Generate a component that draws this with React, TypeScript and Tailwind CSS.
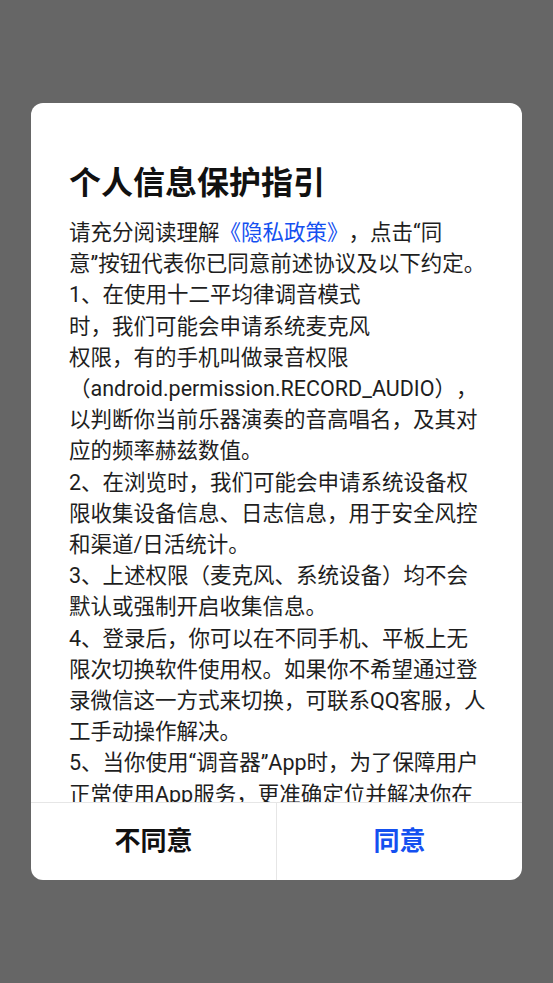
import React from 'react';

const FONT = { fontFamily: 'Roboto, "Noto Sans CJK SC", sans-serif' };

const lines: React.ReactNode[] = [
  <>
    请充分阅读理解<span className="text-[#1450f0]">《隐私政策》</span>，点击“同
  </>,
  '意”按钮代表你已同意前述协议及以下约定。',
  '1、在使用十二平均律调音模式',
  '时，我们可能会申请系统麦克风',
  '权限，有的手机叫做录音权限',
  '（android.permission.RECORD_AUDIO），',
  '以判断你当前乐器演奏的音高唱名，及其对',
  '应的频率赫兹数值。',
  '2、在浏览时，我们可能会申请系统设备权',
  '限收集设备信息、日志信息，用于安全风控',
  '和渠道/日活统计。',
  '3、上述权限（麦克风、系统设备）均不会',
  '默认或强制开启收集信息。',
  '4、登录后，你可以在不同手机、平板上无',
  '限次切换软件使用权。如果你不希望通过登',
  '录微信这一方式来切换，可联系QQ客服，人',
  '工手动操作解决。',
  '5、当你使用“调音器”App时，为了保障用户',
  '正常使用App服务，更准确定位并解决你在',
  '使用过程中遇到的问题，我们会收集必要的',
  '设备信息。',
];

export default function App() {
  return (
    <div
      className="w-full h-[983px] bg-[#666666] pt-[103px] px-[31px] [text-spacing-trim:space-all]"
      style={FONT}
    >
      <div className="w-[491px] h-[777px] bg-white rounded-[12px] overflow-hidden flex flex-col">
        <h1 className="pt-[60px] px-[38px] text-[32px] leading-[40px] font-bold text-[#111]">
          个人信息保护指引
        </h1>
        <div className="flex-1 overflow-hidden mt-[14px] pl-[38px] pr-[20px] text-[21.5px] leading-[31.2px] text-[#1e1e1e]">
          {lines.map((l, i) => (
            <div key={i} className="whitespace-nowrap">
              {l}
            </div>
          ))}
        </div>
        <div className="h-[78px] border-t border-[#e6e6e6] flex">
          <button className="flex-1 flex items-center justify-center text-[26px] font-bold text-[#111]">
            不同意
          </button>
          <div className="w-px bg-[#e6e6e6]" />
          <button className="flex-1 flex items-center justify-center text-[26px] font-bold text-[#1450f0]">
            同意
          </button>
        </div>
      </div>
    </div>
  );
}
